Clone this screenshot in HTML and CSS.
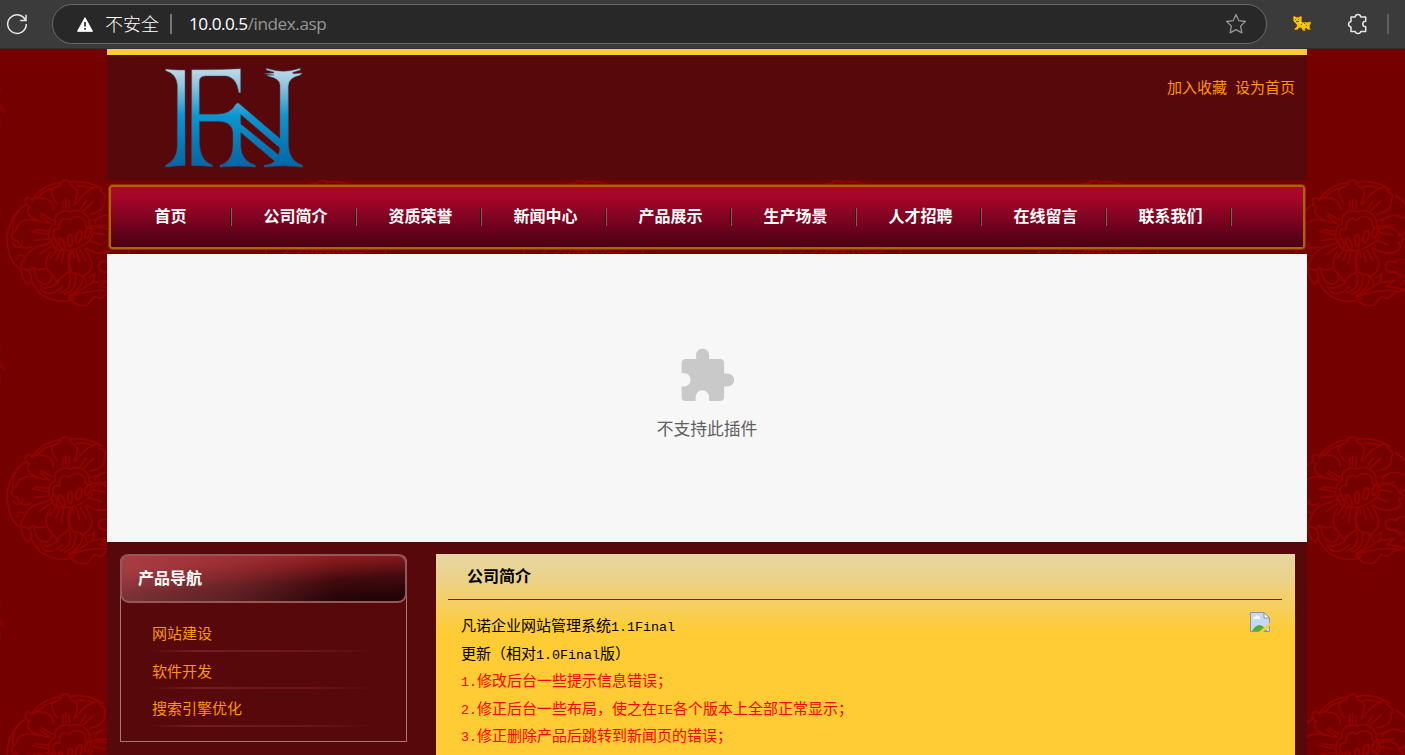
FILE: index.html
```html
<!DOCTYPE html>
<html lang="zh-CN">
<head>
<meta charset="utf-8">
<title>公司简介</title>
<link rel="stylesheet" href="styles.css">
</head>
<body>
<div class="browser">
  <svg class="reload" width="24" height="24" viewBox="0 0 24 24" fill="none" stroke="#e8e8e8" stroke-width="1.5"><path d="M20.6 8.5A9.3 9.3 0 1 0 21.3 12"/><path d="M21 2.8V8.6H15.2"/></svg>
  <div class="address">
    <svg class="warn" width="16" height="15" viewBox="0 0 16 15"><path d="M8 .7 15.5 14.3H.5Z" fill="#fff" stroke="#fff" stroke-linejoin="round"/><path d="M8 5v4.6M8 11v1.8" stroke="#282828" stroke-width="1.7"/></svg>
    <span class="insecure">不安全</span>
    <span class="bar"></span>
    <span class="url">10.0.0.5<span class="path">/index.asp</span></span>
    <svg class="star" width="22" height="22" viewBox="0 0 22 22" fill="none" stroke="#969696" stroke-width="1.3" stroke-linejoin="round"><path d="M11 1.5 13.8 7.7 20.4 8.5 15.6 13.1 16.9 19.9 11 16.6 5.1 19.9 6.4 13.1 1.6 8.5 8.2 7.7Z"/></svg>
  </div>
  <svg class="cat" width="20" height="18" viewBox="0 0 20 18"><path d="M1 1h2l1 1h3l1-1h2v6h7l2-1v3l-1 1v3l1 2h-3l-2-2-1 1 1 2h-3l-2-3H7l-1 2H2v-1l3-3-1-2-3-3Z" fill="#f3c400" stroke="#6b3510" stroke-width=".7"/><path d="M3 4h1v1H3zM6 4h1v1H6zM4 6h3v1H4zM9 9h1v1H9zM12 8h1v1h-1zM14 10h1v1h-1z" fill="#81500b"/><path d="M2 2h1v1H2zM7 7h2v1H7zM11 9h1v1h-1z" fill="#fff16a"/></svg>
  <svg class="extension" width="22" height="22" viewBox="0 0 22 22" fill="none" stroke="#e6e6e6" stroke-width="1.5" stroke-linejoin="round"><path d="M4 4h4.2C8.4 2.5 9.4 1.6 11 1.6S13.6 2.5 13.8 4H18.7V8.2C16.8 8.3 15.7 9.4 15.7 11S16.8 13.7 18.7 13.8V18.5H13.8C13.6 19.8 12.6 20.6 11 20.6S8.4 19.8 8.2 18.5H4V14C2.5 13.7 1.6 12.6 1.6 11.2S2.5 8.7 4 8.4Z"/></svg>
  <span class="bar edge"></span>
</div>
<div class="page">
  <header class="header">
    <svg class="logo" width="170" height="125" viewBox="0 15 510 375">
      <defs><linearGradient id="ice" gradientUnits="userSpaceOnUse" x1="0" y1="55" x2="0" y2="350"><stop offset="0" stop-color="#c2dbe8"/><stop offset=".18" stop-color="#8dc4df"/><stop offset=".48" stop-color="#0c96cf"/><stop offset=".75" stop-color="#067bb9"/><stop offset="1" stop-color="#0665a5"/></linearGradient></defs>
      <g fill="url(#ice)" fill-rule="evenodd" stroke="#385a78" stroke-width="1.5">
        <path d="M47 57Q70 60 88 60H105V346Q80 347 47 351V346Q81 330 82 290V105Q80 72 47 62Z"/>
        <path d="M125 59Q200 60 272 56V128H266Q261 83 228 78H166Q148 78 148 96V193H198Q243 193 257 163L264 158 390 266V105Q389 86 356 79L350 76 372 75 343 71 370 69Q376 67 368 65L349 60V55Q378 64 400 64T451 55V60L430 67Q423 70 432 71L457 69 450 76Q417 82 415 108V285Q417 333 457 346V351Q400 344 343 351V346Q368 343 374 333L272 247V290Q274 332 316 346V351Q263 345 210 351V346Q247 334 249 290V248Q246 215 205 214H148V280Q150 334 187 345V350Q155 346 125 347ZM272 193V222L386 315 390 294Z"/>
      </g>
    </svg>
    <div class="tools"><a>加入收藏</a><a>设为首页</a></div>
  </header>
  <nav class="menu"><a>首页</a><a>公司简介</a><a>资质荣誉</a><a>新闻中心</a><a>产品展示</a><a>生产场景</a><a>人才招聘</a><a>在线留言</a><a>联系我们</a></nav>
  <section class="plugin">
    <svg width="54" height="54" viewBox="-.6 0 54 54"><path fill="#c9c9c9" d="M5 11H15.5V7A6.3 6.3 0 0 1 28.5 7V11H39Q43.500 11 43.500 15.500V25.500H47A6.300 6.300 0 0 1 47 38.500H43.500V48.500Q43.500 53 39 53H28.500V49A6.500 6.500 0 0 0 15 49V53H5Q1 53 1 48.500V38.500H4.500A6.800 6.800 0 0 0 4.500 25.200H1V15.500Q1 11 5 11Z"/></svg>
    <span>不支持此插件</span>
  </section>
  <div class="columns">
    <aside class="sidebar">
      <h2>产品导航</h2>
      <ul><li>网站建设</li><li>软件开发</li><li>搜索引擎优化</li></ul>
    </aside>
    <main class="about">
      <h2>公司简介</h2>
      <div class="article">
        <div class="copy">
          <p>凡诺企业网站管理系统<span class="latin">1.1Final</span></p>
          <p>更新（相对<span class="latin">1.0Final</span>版）</p>
          <p class="fix"><span class="latin">1.</span>修改后台一些提示信息错误；</p>
          <p class="fix"><span class="latin">2.</span>修正后台一些布局，使之在<span class="latin">IE</span>各个版本上全部正常显示；</p>
          <p class="fix"><span class="latin">3.</span>修正删除产品后跳转到新闻页的错误；</p>
        </div>
        <svg class="broken" width="20" height="20" viewBox="0 0 20 20"><path d="M.5.5H14L19.500 6V19.500H.5Z" fill="#c7d8f5" stroke="#8c949c"/><path d="M3 7q0-2 2-2 1-3 3-1 2 0 2 3Z" fill="#fff"/><path d="M2 19Q9 7 17 19Z" fill="#51ae38"/><path d="M14 .5V6H19.500Z" fill="#f8f8f8" stroke="#8c949c"/><path d="M8.500 20 20 10.500V14L13 20Z" fill="#ffcc35"/></svg>
      </div>
    </main>
  </div>
</div>
</body>
</html>
```
FILE: styles.css
```css
* { box-sizing: border-box; }
body {
  margin: 0;
  height: 755px;
  overflow: hidden;
  font: 15px "Noto Sans CJK SC", sans-serif;
  background-color: #750000;
  background-position: 0 49px;
  background-size: 257.4px 257.4px;
  background-image: url("data:image/svg+xml,%3Csvg xmlns='http://www.w3.org/2000/svg' width='257.4' height='257.4' viewBox='0 0 257.4 257.4'%3E%3Cg transform='translate(0 121) scale(.33333)' fill='none' stroke='%23900300' stroke-width='5' stroke-linecap='round'%3E%3Cpath d='M80 100C30 130 15 190 24 232C28 270 45 290 62 300M62 115C38 140 36 160 40 182M95 88C120 55 150 40 180 38M110 84C130 62 150 55 160 54M212 36C250 28 290 45 308 57M228 49C250 45 270 50 282 55M325 76C352 92 371 118 376 148M388 178C392 220 385 265 363 300M92 330C110 375 150 398 195 395C208 395 216 390 222 386'/%3E%3Cpath d='M172 100C160 85 148 65 160 55C165 47 180 52 182 40C183 26 207 26 209 40C212 52 225 48 230 60C235 75 225 90 222 102M160 117C158 95 140 80 125 85C115 76 100 82 98 90C85 75 75 85 76 95C74 102 82 108 88 110C78 120 85 135 95 142C110 150 130 155 145 158M116 153C80 140 50 155 50 175C45 182 35 185 35 195C35 206 45 210 52 210C60 232 75 237 95 229M130 225C100 228 75 250 70 275C58 285 62 300 75 299C85 306 92 302 96 294C110 305 125 300 135 297M150 245C140 260 133 280 142 300C150 312 160 318 172 338C180 320 195 318 208 304C205 280 200 260 210 243M215 243C203 270 205 290 215 308C225 317 240 312 250 321C262 310 278 303 275 280C270 260 260 245 255 235M258 232C275 245 300 252 323 245C342 238 343 225 335 217C353 212 350 200 337 196C333 177 303 164 282 175M228 100C240 80 255 65 275 55C290 45 302 50 300 62C310 68 322 75 312 90C315 110 300 125 270 131M285 157C290 135 330 128 343 142C365 136 369 158 358 165C370 180 350 190 335 194'/%3E%3Cpath d='M165 205C150 190 160 172 178 175C175 150 190 138 208 150C225 130 260 140 255 165C262 168 262 176 258 180M157 223C138 200 145 165 165 160C158 130 190 115 210 125C240 110 270 135 267 163C281 170 279 190 275 202C250 230 210 250 168 236M188 92V115M197 87V114M207 91V115M242 115L257 92M251 120L280 93M273 150L306 140M280 167L318 165M282 188L315 193M270 211L302 223M240 239L258 272M228 242L237 276M218 243L222 260M191 243L184 284M180 241L167 273M169 239L150 263M151 229L119 251M148 218L117 228M145 205L102 210M146 193L96 184M148 183L105 178M150 158L121 137M157 149L123 130'/%3E%3Cg stroke-width='6'%3E%3Cellipse cx='163' cy='219' rx='7' ry='16' transform='rotate(-17 163 219)'/%3E%3Cellipse cx='185' cy='220' rx='7' ry='18' transform='rotate(-22 185 220)'/%3E%3Cellipse cx='210' cy='210' rx='7' ry='18'/%3E%3Cellipse cx='236' cy='199' rx='8' ry='18' transform='rotate(16 236 199)'/%3E%3Cellipse cx='263' cy='187' rx='7' ry='16' transform='rotate(20 263 187)'/%3E%3C/g%3E%3Cpath d='M38 218C50 240 70 229 67 215M53 268C48 254 60 250 71 257M62 302C66 324 76 339 84 345L95 326L89 306M102 302C106 347 149 358 156 321M122 348C127 382 166 375 187 351M131 355C149 359 167 343 175 341M180 370C208 362 215 338 208 309M193 373C219 369 229 344 226 317M207 378C243 358 253 328 243 318M206 384C242 362 265 346 278 339L320 334L300 350L356 361L320 370L303 386L281 382L267 399C264 411 240 409 232 406Q218 400 206 384Q265 358 328 364M260 342L251 321M278 339L283 314L265 325M340 345C362 330 371 311 369 285C360 264 334 263 327 279C287 264 287 303 311 308C325 303 337 311 338 325M300 303L347 318'/%3E%3C/g%3E%3Cpath d='M0 38Q3 40 1 45ZM0 54Q4 57 5 65L0 61ZM0 67Q2 72 0 77Z' fill='%23840008'/%3E%3C/svg%3E");
}
.browser {
  height: 49px;
  display: flex;
  align-items: center;
  background: #3b3b3b;
  border-bottom: 1px solid #303030;
}
.reload { margin-left: 5px; }
.address {
  width: 1215px;
  height: 40px;
  margin-left: 23px;
  padding: 0 19px 0 24px;
  border: 1px solid #696969;
  border-radius: 20px;
  background: #282828;
  color: #fff;
  display: flex;
  align-items: center;
  font-size: 18px;
}
.insecure { margin-left: 12px; line-height: 24px; padding-bottom: 2px; font-weight: 300; }
.bar { width: 2px; height: 20px; margin-left: 11px; background: #777; }
.url { margin-left: 17px; padding-bottom: 2px; font: 17.2px "Open Sans", sans-serif; letter-spacing: -.5px; }
.path { color: #969696; letter-spacing: -.45px; }
.star { margin-left: auto; }
.cat { margin-left: 25px; }
.extension { margin-left: 35px; }
.edge { margin-left: 18px; background: #606060; }
.page { width: 1200px; margin-left: 107px; }
.header {
  height: 131px;
  border-top: 6px solid #ffcc35;
  background: #57080a;
  display: flex;
  justify-content: space-between;
}
.logo { margin-left: 43px; }
.tools { display: flex; gap: 8px; padding: 21px 12px 0 0; color: #ff9500; line-height: 22px; }
.menu {
  height: 64px;
  margin: 5px 2px;
  border: 2px solid #ad6500;
  border-radius: 3px;
  outline: 1px solid #873000;
  background: linear-gradient(#ae072e, #a8062b 15%, #4a0015);
  display: flex;
  align-items: center;
}
.menu a {
  width: 125px;
  height: 18px;
  padding-left: 3px;
  text-align: center;
  color: #fff;
  font-weight: bold;
  font-size: 16px;
  line-height: 15px;
  border-right: 1px solid #a84c57;
  background: linear-gradient(#100005, #100005) right / 1px 100% no-repeat;
}
.menu a:first-child { width: 121px; padding: 0 1px 0 0; }
.plugin {
  height: 288px;
  background: #f7f7f7;
  display: flex;
  flex-direction: column;
  align-items: center;
  padding-top: 94px;
  color: #606060;
  font-size: 16.8px;
}
.plugin span { margin-top: 14px; line-height: 24px; }
.columns {
  height: 213px;
  padding: 12px 12px 0 13px;
  background: #57080a;
  display: flex;
  gap: 29px;
}
.sidebar { width: 287px; height: 188px; border: 1px solid #a87778; border-top: 0; border-radius: 8px 8px 0 0; }
.sidebar h2 {
  height: 49px;
  margin: 0 -1px;
  padding-left: 16px;
  border: 2px solid #95575a;
  border-radius: 9px;
  color: #fff;
  font-size: 16px;
  line-height: 43px;
  background:
    linear-gradient(90deg, rgba(183, 92, 98, .5), rgba(170, 75, 80, .35) 40%, transparent 75%) 0 0 / 100% 100%,
    linear-gradient(176deg, #981e24 20%, #7d171b 35%, #420a0d 60%, #1d0305 95%);
  background-origin: border-box;
}
.sidebar ul { list-style: none; margin: 0; padding: 11px 26px 0 27px; }
.sidebar li {
  height: 37.5px;
  padding-left: 4px;
  color: #ff9500;
  line-height: 38px;
  background: linear-gradient(90deg, transparent, #761b20 20%, #6e161b 65%, transparent) bottom / 100% 2px no-repeat;
}
.about { width: 859px; padding: 0 13px 0 12px; background: linear-gradient(#e8d6a1, #ebd28a 25px, #ffcc35 77px); }
.about h2 { margin: 0; height: 46px; padding-left: 19px; border-bottom: 1px solid #c00000; font-size: 16px; line-height: 42px; }
.article { display: flex; justify-content: space-between; padding: 12px 12px 0 13px; }
.copy { margin-top: -1px; line-height: 27.5px; }
.copy p { margin: 0; height: 27.5px; white-space: nowrap; }
.latin { font-family: "Liberation Mono", monospace; font-size: 13.33px; }
.fix { color: #f00; }
```
